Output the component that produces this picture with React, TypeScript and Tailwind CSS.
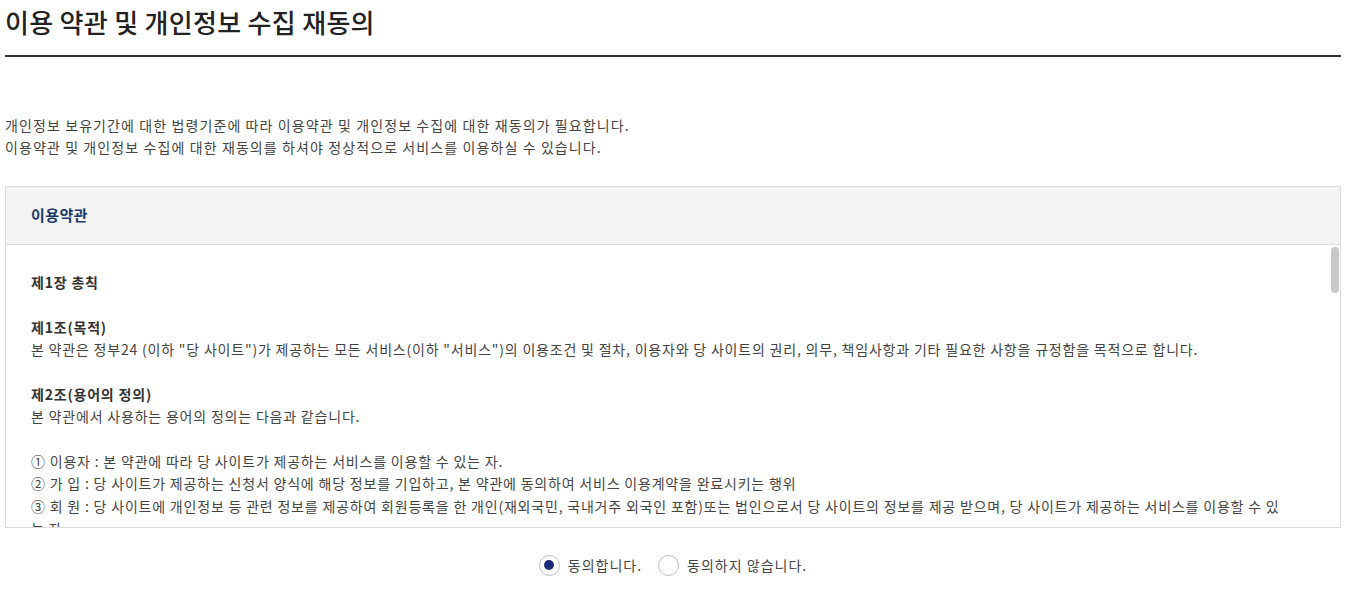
import React from "react";

const font = { fontFamily: '"Noto Sans CJK KR", "Noto Sans", sans-serif' };

function Radio({ checked, label }: { checked: boolean; label: string }) {
  return (
    <label className="flex items-center gap-[8px] cursor-pointer">
      <span className="flex h-[21px] w-[21px] shrink-0 items-center justify-center rounded-full border-[1.5px] border-[#bdbdbd] bg-white">
        {checked && <span className="h-[10px] w-[10px] rounded-full bg-[#1e2a78]" />}
      </span>
      <span className="text-[14px] leading-[22px] tracking-[1px] text-[#444]">{label}</span>
    </label>
  );
}

export default function App() {
  return (
    <div className="bg-white text-[#333] min-h-[590px]" style={font}>
      <div className="ml-[5px] w-[1336px]">
        <div className="border-b-2 border-[#333] pb-[11px]">
          <h1 className="text-[26px] leading-[44px] font-medium tracking-[0.3px] text-[#222]">
            이용 약관 및 개인정보 수집 재동의
          </h1>
        </div>

        <div className="mt-[57px] text-[14px] leading-[22px] text-[#444] tracking-[1.1px]">
          <p>개인정보 보유기간에 대한 법령기준에 따라 이용약관 및 개인정보 수집에 대한 재동의가 필요합니다.</p>
          <p>이용약관 및 개인정보 수집에 대한 재동의를 하셔야 정상적으로 서비스를 이용하실 수 있습니다.</p>
        </div>

        <div className="mt-[28px] border border-[#dcdcdc]">
          <div className="flex h-[58px] items-center border-b border-[#dcdcdc] bg-[#f4f4f4] px-[25px]">
            <span className="text-[15px] font-bold tracking-[0.4px] text-[#1b3b6a]">이용약관</span>
          </div>
          <div className="relative h-[282px] overflow-hidden">
            <div className="pl-[25px] pr-[20px] pt-[26px] text-[14px] leading-[22.5px] text-[#444] tracking-[0.8px]">
              <p className="font-bold text-[#333]">제1장 총칙</p>
              <p className="mt-[22px] font-bold text-[#333]">제1조(목적)</p>
              <p>본 약관은 정부24 (이하 "당 사이트")가 제공하는 모든 서비스(이하 "서비스")의 이용조건 및 절차, 이용자와 당 사이트의 권리, 의무, 책임사항과 기타 필요한 사항을 규정함을 목적으로 합니다.</p>
              <p className="mt-[22px] font-bold text-[#333]">제2조(용어의 정의)</p>
              <p>본 약관에서 사용하는 용어의 정의는 다음과 같습니다.</p>
              <p className="mt-[22px]">① 이용자 : 본 약관에 따라 당 사이트가 제공하는 서비스를 이용할 수 있는 자.</p>
              <p>② 가 입 : 당 사이트가 제공하는 신청서 양식에 해당 정보를 기입하고, 본 약관에 동의하여 서비스 이용계약을 완료시키는 행위</p>
              <p>③ 회 원 : 당 사이트에 개인정보 등 관련 정보를 제공하여 회원등록을 한 개인(재외국민, 국내거주 외국인 포함)또는 법인으로서 당 사이트의 정보를 제공 받으며, 당 사이트가 제공하는 서비스를 이용할 수 있<br />는 자.</p>
              <p>④ 아이디(ID) : 회원의 식별과 서비스 이용을 위하여 회원이 선정하고 당 사이트가 부여하는 문자와 숫자의 조합</p>
            </div>
            <div className="absolute right-[1px] top-[2px] h-[46px] w-[8px] rounded-full bg-[#c8c8c8]" />
          </div>
        </div>

        <div className="mt-[26px] flex items-center justify-center gap-[16px]">
          <Radio checked label="동의합니다." />
          <Radio checked={false} label="동의하지 않습니다." />
        </div>
      </div>
    </div>
  );
}
